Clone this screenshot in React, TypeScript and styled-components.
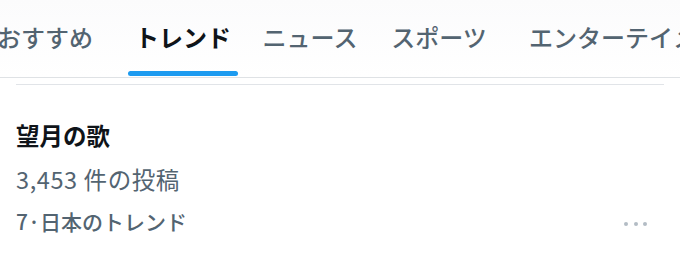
import React from "react";
import styled, { createGlobalStyle } from "styled-components";

const GlobalStyle = createGlobalStyle`
  html, body {
    margin: 0;
    padding: 0;
    background: #ffffff;
  }
  body {
    width: 680px;
    height: 268px;
    overflow: hidden;
    font-family: "Noto Sans CJK JP", "Noto Sans", sans-serif;
  }
`;

const tabs = [
  { label: "おすすめ", lead: -10 },
  { label: "トレンド", lead: 28, active: true },
  { label: "ニュース", lead: 17 },
  { label: "スポーツ", lead: 19 },
  { label: "エンターテイメント", lead: 35 },
];

const App = () => {
  return (
    <Page>
      <GlobalStyle />
      <TabBar>
        {tabs.map((tab) => (
          <Tab key={tab.label} $lead={tab.lead}>
            <TabLabel $active={!!tab.active}>{tab.label}</TabLabel>
            <Indicator $active={!!tab.active} />
          </Tab>
        ))}
      </TabBar>
      <Divider />
      <TrendItem>
        <TrendText>
          <Title>望月の歌</Title>
          <Count>3,453 件の投稿</Count>
          <Meta>7·日本のトレンド</Meta>
        </TrendText>
        <MoreButton aria-label="その他">
          <Dot />
          <Dot />
          <Dot />
        </MoreButton>
      </TrendItem>
    </Page>
  );
};

const Page = styled.div`
  width: 680px;
  height: 268px;
  background: #ffffff;
  display: flex;
  flex-direction: column;
`;

const TabBar = styled.nav`
  display: flex;
  height: 77px;
  border-bottom: 1px solid #dfe2e5;
  background: linear-gradient(#fbfbfc, #ffffff);
  overflow: hidden;
  white-space: nowrap;
`;

const Tab = styled.div<{ $lead: number }>`
  display: flex;
  flex-direction: column;
  align-items: center;
  flex-shrink: 0;
  margin-left: ${(p) => p.$lead}px;
`;

const TabLabel = styled.span<{ $active: boolean }>`
  margin-top: 25px;
  font-size: 24px;
  line-height: 24px;
  font-weight: ${(p) => (p.$active ? 700 : 500)};
  color: ${(p) => (p.$active ? "#0f1419" : "#536471")};
`;

const Indicator = styled.div<{ $active: boolean }>`
  margin-top: auto;
  margin-bottom: 1px;
  width: 110px;
  height: 5px;
  border-radius: 3px;
  background: ${(p) => (p.$active ? "#1d9bf0" : "transparent")};
`;

const Divider = styled.div`
  margin: 6px 16px 0;
  height: 1px;
  background: #e1e4e8;
`;

const TrendItem = styled.div`
  display: flex;
  align-items: flex-end;
  justify-content: space-between;
  padding: 0 33px 0 16px;
`;

const TrendText = styled.div`
  display: flex;
  flex-direction: column;
`;

const Title = styled.div`
  margin-top: 37px;
  font-size: 23.5px;
  line-height: 26px;
  font-weight: 700;
  color: #0f1419;
`;

const Count = styled.div`
  margin-top: 18px;
  font-size: 23.5px;
  line-height: 26px;
  letter-spacing: 0.6px;
  font-weight: 400;
  color: #536471;
`;

const Meta = styled.div`
  margin-top: 17px;
  font-size: 21px;
  line-height: 24px;
  font-weight: 500;
  color: #536471;
`;

const MoreButton = styled.div`
  display: flex;
  gap: 5.5px;
  margin-bottom: 7px;
`;

const Dot = styled.span`
  width: 4px;
  height: 4px;
  border-radius: 50%;
  background: #b3bcc5;
`;

export default App;
